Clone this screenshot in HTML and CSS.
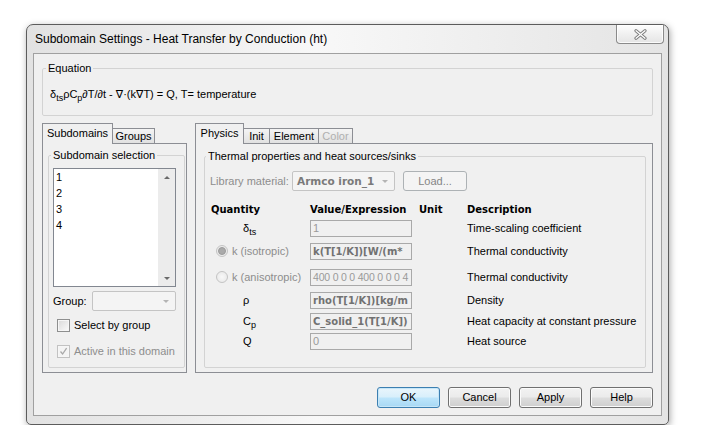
FILE: index.html
```html
<!DOCTYPE html>
<html>
<head>
<meta charset="utf-8">
<title>Subdomain Settings</title>
<link rel="stylesheet" href="styles.css">
</head>
<body>
<div class="window">
  <div class="titlebar">
    <span class="title">Subdomain Settings - Heat Transfer by Conduction (ht)</span>
    <div class="close">
      <svg width="13" height="11" viewBox="0 0 13 11">
        <path d="M2 1.8 L11 9.2 M11 1.8 L2 9.2" stroke="#7d7d7d" stroke-width="3.2" stroke-linecap="round"/>
        <path d="M2 1.8 L11 9.2 M11 1.8 L2 9.2" stroke="#ffffff" stroke-width="1.3" stroke-linecap="round"/>
      </svg>
    </div>
  </div>
  <div class="client">
    <fieldset class="group eq">
      <legend>Equation</legend>
      <div class="eqtext">δ<sub>ts</sub>ρC<sub>p</sub>∂T/∂t - ∇·(k∇T) = Q, T= temperature</div>
    </fieldset>

    <div class="panes">
      <div class="tabctl left">
        <div class="tabstrip">
          <div class="tab sel t-sub">Subdomains</div>
          <div class="tab t-grp">Groups</div>
        </div>
        <div class="pane pane-left">
          <fieldset class="group selgroup">
            <legend>Subdomain selection</legend>
            <div class="listbox">
              <div class="items">
                <div class="item">1</div>
                <div class="item">2</div>
                <div class="item">3</div>
                <div class="item">4</div>
              </div>
              <div class="vscroll">
                <span class="arr up"></span>
                <span class="arr down"></span>
              </div>
            </div>
            <div class="grouprow">
              <span>Group:</span>
              <div class="combo dis small"><span class="carrow"></span></div>
            </div>
            <div class="check">
              <span class="cb"></span>
              <span>Select by group</span>
            </div>
            <div class="check dis">
              <span class="cb checked">
                <svg width="9" height="9" viewBox="0 0 9 9"><path d="M1.5 4.5 L3.6 7 L7.6 1.2" fill="none" stroke="#a9a9a9" stroke-width="1.3"/></svg>
              </span>
              <span>Active in this domain</span>
            </div>
          </fieldset>
        </div>
      </div>

      <div class="tabctl right">
        <div class="tabstrip">
          <div class="tab sel t-phy">Physics</div>
          <div class="tab t-init">Init</div>
          <div class="tab t-elem">Element</div>
          <div class="tab t-col disabled">Color</div>
        </div>
        <div class="pane pane-right">
          <fieldset class="group thermal">
            <legend>Thermal properties and heat sources/sinks</legend>
            <div class="librow">
              <span class="liblabel">Library material:</span>
              <div class="combo dis lib"><span class="combotext">Armco iron_1</span><span class="carrow"></span></div>
              <div class="loadbtn">Load...</div>
            </div>
            <div class="qtable">
              <div class="hd">Quantity</div>
              <div class="hd">Value/Expression</div>
              <div class="hd">Unit</div>
              <div class="hd">Description</div>

              <div class="sym">δ<sub>ts</sub></div>
              <div class="val"><div class="field">1</div></div>
              <div class="unit"></div>
              <div class="desc">Time-scaling coefficient</div>

              <div class="radiocell"><span class="radio on"></span><span>k (isotropic)</span></div>
              <div class="val"><div class="field bold">k(T[1/K])[W/(m*</div></div>
              <div class="unit"></div>
              <div class="desc">Thermal conductivity</div>

              <div class="radiocell"><span class="radio"></span><span>k (anisotropic)</span></div>
              <div class="val"><div class="field narrow">400 0 0 0 400 0 0 0 4</div></div>
              <div class="unit"></div>
              <div class="desc">Thermal conductivity</div>

              <div class="sym">ρ</div>
              <div class="val"><div class="field bold">rho(T[1/K])[kg/m</div></div>
              <div class="unit"></div>
              <div class="desc">Density</div>

              <div class="sym">C<sub>p</sub></div>
              <div class="val"><div class="field bold">C_solid_1(T[1/K])</div></div>
              <div class="unit"></div>
              <div class="desc">Heat capacity at constant pressure</div>

              <div class="sym">Q</div>
              <div class="val"><div class="field">0</div></div>
              <div class="unit"></div>
              <div class="desc">Heat source</div>
            </div>
          </fieldset>
        </div>
      </div>
    </div>

    <div class="buttons">
      <div class="btn default">OK</div>
      <div class="btn">Cancel</div>
      <div class="btn">Apply</div>
      <div class="btn">Help</div>
    </div>
  </div>
</div>
</body>
</html>
```

FILE: styles.css
```css
* { box-sizing: border-box; }

html, body {
  margin: 0;
  background: #ffffff;
}

body {
  padding: 24px 0 0 26px;
  font: 11px/13px "Liberation Sans", "DejaVu Sans", sans-serif;
  color: #000;
}

.window {
  width: 643px;
  height: 401px;
  border: 1px solid #5c5c5c;
  border-radius: 7px 7px 5px 5px;
  background: linear-gradient(to right, #e2e2e2 0%, #ededed 25%, #f8f8f8 45%, #efefef 70%, #e4e4e4 100%);
  box-shadow: 1px 2px 7px rgba(0, 0, 0, 0.35);
  display: flex;
  flex-direction: column;
}

.titlebar {
  height: 28px;
  display: flex;
  align-items: center;
  padding-left: 8px;
}

.title {
  font-size: 12px;
  line-height: 15px;
  margin-top: 1px;
  color: #000;
}

.close {
  margin-left: auto;
  margin-right: 4px;
  align-self: flex-start;
  width: 48px;
  height: 19px;
  border: 1px solid #8a8a8a;
  border-top: none;
  border-radius: 0 0 4px 4px;
  background: linear-gradient(#fdfdfd, #e4e4e4);
  box-shadow: inset 0 0 0 1px rgba(255, 255, 255, 0.8);
  display: flex;
  align-items: center;
  justify-content: center;
}

.client {
  margin: 0 6px;
  height: 363px;
  border: 1px solid #a0a0a0;
  background: #f0f0f0;
  padding: 8px 8px 7px 8px;
  display: flex;
  flex-direction: column;
}

/* group boxes */
fieldset.group {
  margin: 0;
  min-width: 0;
  border: 1px solid #d3d3d3;
  border-radius: 2px;
}

fieldset.group legend {
  padding: 0 2px;
  margin-left: -2px;
  line-height: 13px;
}

.eq {
  height: 54px;
  padding: 0 5px;
}

.eqtext {
  margin-top: 11px;
  line-height: 16px;
  padding-left: 2px;
  white-space: nowrap;
}

sub {
  font-size: 9px;
  line-height: 0;
  vertical-align: -3px;
}

/* tab controls */
.panes {
  display: flex;
  gap: 8px;
  margin-top: 7px;
  height: 250px;
}

.tabctl {
  display: flex;
  flex-direction: column;
}

.tabctl.left { width: 145px; }
.tabctl.right { flex: 1; }

.tabstrip {
  height: 20px;
  display: flex;
  align-items: flex-end;
}

.tab {
  height: 15px;
  padding-top: 1px;
  line-height: 13px;
  text-align: center;
  border: 1px solid #8c8e94;
  border-bottom: none;
  margin-left: -1px;
  background: linear-gradient(#f4f4f4, #e1e1e1);
  white-space: nowrap;
}

.tab:first-child { margin-left: 0; }

.tab.sel {
  height: 21px;
  padding-top: 3px;
  margin-bottom: -1px;
  background: #f0f0f0;
  position: relative;
  z-index: 1;
}

.tab.disabled { color: #b0b0b0; }

.t-sub { width: 71px; }
.t-grp { width: 43px; }
.t-phy { width: 49px; }
.t-init { width: 27px; }
.t-elem { width: 50px; }
.t-col { width: 35px; }

.pane {
  height: 230px;
  border: 1px solid #8c8e94;
  background: #f0f0f0;
}

.pane-left { padding: 5px 1px 0 5px; }
.pane-right { padding: 6px 6px 0 8px; }

/* left pane */
.selgroup {
  height: 219px;
  padding: 0 7px 0 4px;
}

.listbox {
  margin-top: 6px;
  width: 123px;
  height: 119px;
  border: 1px solid #828790;
  background: #fff;
  display: flex;
}

.items {
  flex: 1;
  padding-left: 2px;
}

.item {
  height: 16px;
  line-height: 16px;
}

.vscroll {
  width: 17px;
  background: #ececec;
  display: flex;
  flex-direction: column;
  justify-content: space-between;
  align-items: center;
  padding: 7px 0 6px;
}

.arr {
  width: 0;
  height: 0;
  border-left: 3px solid transparent;
  border-right: 3px solid transparent;
}

.arr.up { border-bottom: 3px solid #6a6a6a; }
.arr.down { border-top: 3px solid #6a6a6a; }

.grouprow {
  margin-top: 4px;
  height: 20px;
  display: flex;
  align-items: center;
}

.combo {
  height: 20px;
  border: 1px solid #c4c4c4;
  background: #f4f4f4;
  border-radius: 2px;
  display: flex;
  align-items: center;
}

.combo.small {
  width: 84px;
  margin-left: auto;
  margin-right: 1px;
  justify-content: flex-end;
}

.carrow {
  width: 0;
  height: 0;
  border-left: 3px solid transparent;
  border-right: 3px solid transparent;
  border-top: 3px solid #b4b4b4;
  margin: 1px 6px 0 4px;
}

.check {
  height: 22px;
  display: flex;
  align-items: center;
  gap: 4px;
  padding-left: 4px;
  margin-top: 3px;
}

.check + .check { margin-top: 4px; }

.check.dis { color: #8d8d8d; }

.cb {
  width: 13px;
  height: 13px;
  border: 1px solid #8e8f8f;
  background: linear-gradient(135deg, #d9d9d9, #fbfbfb);
  box-shadow: inset 0 0 0 1px #f6f6f6;
  display: flex;
  align-items: center;
  justify-content: center;
}

.cb.checked {
  border-color: #c2c2c2;
  background: #f4f4f4;
}

/* right pane */
.thermal {
  height: 218px;
  padding: 0 3px;
}

.librow {
  margin-top: 8px;
  height: 20px;
  display: flex;
  align-items: center;
  padding-left: 2px;
}

.liblabel {
  width: 82px;
  color: #8d8d8d;
  white-space: nowrap;
}

.combo.lib {
  width: 103px;
  justify-content: space-between;
}

.combotext {
  font: bold 10.5px/13px "DejaVu Sans", sans-serif;
  color: #7a7a7a;
  padding-left: 4px;
  white-space: nowrap;
}

.loadbtn {
  margin-left: 8px;
  width: 64px;
  height: 20px;
  border: 1px solid #adb2b5;
  border-radius: 3px;
  background: #f4f4f4;
  color: #858585;
  text-align: center;
  line-height: 18px;
}

.qtable {
  margin-top: 9px;
  padding-left: 3px;
  display: grid;
  grid-template-columns: 99px 109px 48px 1fr;
  grid-template-rows: 18px 20px 26px 26px 20px 22px 18px;
  align-items: center;
}

.hd {
  font: bold 10px/13px "DejaVu Sans", sans-serif;
  white-space: nowrap;
}

.sym {
  padding-left: 32px;
  line-height: 14px;
}

.radiocell {
  display: flex;
  align-items: center;
  gap: 4px;
  padding-left: 5px;
  color: #8d8d8d;
  white-space: nowrap;
}

.radio {
  width: 12px;
  height: 12px;
  border-radius: 50%;
  border: 1px solid #c4c4c4;
  background: radial-gradient(circle, #f8f8f8, #e6e6e6);
  display: flex;
  align-items: center;
  justify-content: center;
}

.radio.on::after {
  content: "";
  width: 6px;
  height: 6px;
  border-radius: 50%;
  background: #aaaaaa;
  border: 1px solid #9a9a9a;
}

.field {
  width: 102px;
  height: 17px;
  border: 1px solid #a9a9a9;
  background: #f0f0f0;
  color: #9a9a9a;
  padding-left: 2px;
  line-height: 15px;
  white-space: nowrap;
  overflow: hidden;
}

.field.narrow {
  font-size: 10.5px;
  letter-spacing: -0.2px;
}

.field.bold {
  font: bold 10px/15px "DejaVu Sans", sans-serif;
  color: #727272;
}

.desc { white-space: nowrap; }

/* dialog buttons */
.buttons {
  margin-top: 14px;
  display: flex;
  justify-content: flex-end;
  gap: 8px;
}

.btn {
  width: 63px;
  height: 21px;
  border: 1px solid #707070;
  border-radius: 3px;
  background: linear-gradient(#f2f2f2 0%, #ebebeb 48%, #dddddd 52%, #cfcfcf 100%);
  box-shadow: inset 0 0 0 1px #fbfbfb;
  text-align: center;
  line-height: 19px;
}

.btn.default {
  border-color: #3c7fb1;
  background: linear-gradient(#e9f5fc 0%, #d8effb 48%, #bde5fb 52%, #a7d8f4 100%);
  box-shadow: inset 0 0 0 1px #c6e6f8;
}
```
